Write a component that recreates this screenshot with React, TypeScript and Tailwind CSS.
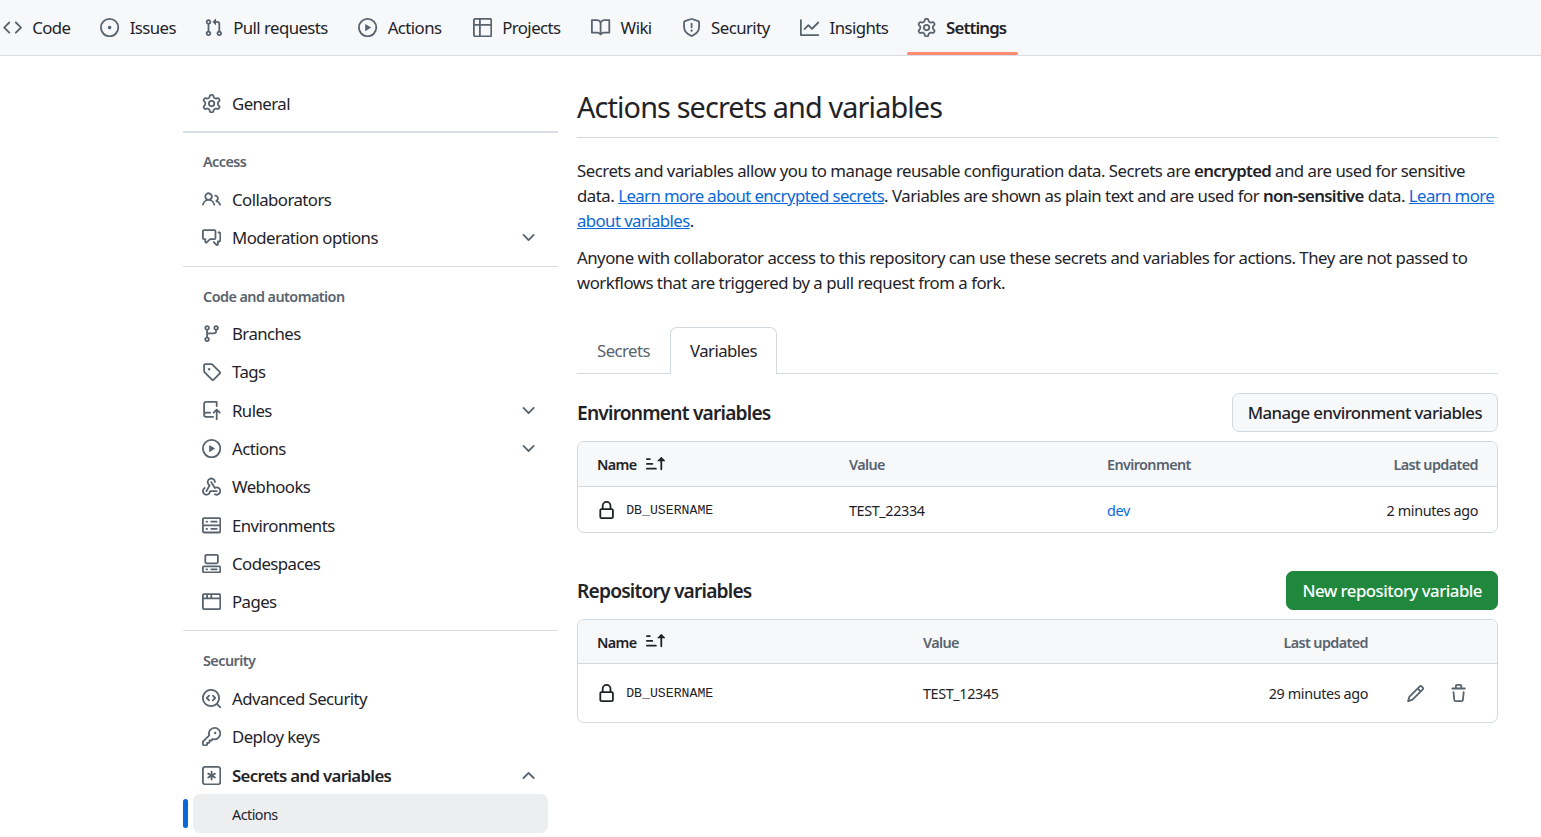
import type { ReactNode } from "react";

// octicons, 16px grid
const icons = {
  code: ["m11.28 3.22 4.25 4.25a.75.75 0 0 1 0 1.06l-4.25 4.25a.749.749 0 0 1-1.275-.326.749.749 0 0 1 .215-.734L13.94 8l-3.72-3.72a.749.749 0 0 1 .326-1.275.749.749 0 0 1 .734.215Zm-6.56 0a.751.751 0 0 1 1.042.018.751.751 0 0 1 .018 1.042L2.06 8l3.72 3.72a.749.749 0 0 1-.326 1.275.749.749 0 0 1-.734-.215L.47 8.53a.75.75 0 0 1 0-1.06Z"],
  issue: ["M8 9.5a1.5 1.5 0 1 0 0-3 1.5 1.5 0 0 0 0 3Z", "M8 0a8 8 0 1 1 0 16A8 8 0 0 1 8 0ZM1.5 8a6.5 6.5 0 1 0 13 0 6.5 6.5 0 0 0-13 0Z"],
  pull: ["M1.5 3.25a2.25 2.25 0 1 1 3 2.122v5.256a2.251 2.251 0 1 1-1.5 0V5.372A2.25 2.25 0 0 1 1.5 3.25Zm5.677-.177L9.573.677A.25.25 0 0 1 10 .854V2.5h1A2.5 2.5 0 0 1 13.5 5v5.628a2.251 2.251 0 1 1-1.5 0V5a1 1 0 0 0-1-1h-1v1.646a.25.25 0 0 1-.427.177L7.177 3.427a.25.25 0 0 1 0-.354ZM3.75 2.5a.75.75 0 1 0 0 1.5.75.75 0 0 0 0-1.5Zm0 9.5a.75.75 0 1 0 0 1.5.75.75 0 0 0 0-1.5Zm8.25.75a.75.75 0 1 0 1.5 0 .75.75 0 0 0-1.5 0Z"],
  play: ["M8 0a8 8 0 1 1 0 16A8 8 0 0 1 8 0ZM1.5 8a6.5 6.5 0 1 0 13 0 6.5 6.5 0 0 0-13 0Zm4.879-2.773 4.264 2.559a.25.25 0 0 1 0 .428l-4.264 2.559A.25.25 0 0 1 6 10.559V5.442a.25.25 0 0 1 .379-.215Z"],
  table: ["M0 1.75C0 .784.784 0 1.75 0h12.5C15.216 0 16 .784 16 1.75v12.5A1.75 1.75 0 0 1 14.25 16H1.75A1.75 1.75 0 0 1 0 14.25ZM6.5 6.5v8h7.75a.25.25 0 0 0 .25-.25V6.5Zm8-1.5V1.75a.25.25 0 0 0-.25-.25H6.5V5Zm-13 1.5v7.75c0 .138.112.25.25.25H5v-8ZM5 5V1.5H1.75a.25.25 0 0 0-.25.25V5Z"],
  book: ["M0 1.75A.75.75 0 0 1 .75 1h4.253c1.227 0 2.317.59 3 1.501A3.743 3.743 0 0 1 11.006 1h4.245a.75.75 0 0 1 .75.75v10.5a.75.75 0 0 1-.75.75h-4.507a2.25 2.25 0 0 0-1.591.659l-.622.621a.75.75 0 0 1-1.06 0l-.622-.621A2.25 2.25 0 0 0 5.258 13H.75a.75.75 0 0 1-.75-.75Zm7.251 10.324.004-5.073-.002-2.253A2.25 2.25 0 0 0 5.003 2.5H1.5v9h3.757a3.75 3.75 0 0 1 1.994.574ZM8.755 4.75l-.004 7.322a3.752 3.752 0 0 1 1.992-.572H14.5v-9h-3.495a2.25 2.25 0 0 0-2.25 2.25Z"],
  shield: ["M7.467.133a1.748 1.748 0 0 1 1.066 0l5.25 1.68A1.75 1.75 0 0 1 15 3.48V7c0 1.566-.32 3.182-1.303 4.682-.983 1.498-2.585 2.813-5.032 3.855a1.697 1.697 0 0 1-1.33 0c-2.447-1.042-4.049-2.357-5.032-3.855C1.32 10.182 1 8.566 1 7V3.48a1.75 1.75 0 0 1 1.217-1.667Zm.61 1.429a.25.25 0 0 0-.153 0l-5.25 1.68a.25.25 0 0 0-.174.238V7c0 1.358.275 2.666 1.057 3.86.784 1.194 2.121 2.34 4.366 3.297a.196.196 0 0 0 .154 0c2.245-.956 3.582-2.104 4.366-3.298C13.225 9.666 13.5 8.36 13.5 7V3.48a.251.251 0 0 0-.174-.237l-5.25-1.68ZM8.75 4.75v3a.75.75 0 0 1-1.5 0v-3a.75.75 0 0 1 1.5 0ZM9 10.5a1 1 0 1 1-2 0 1 1 0 0 1 2 0Z"],
  graph: ["M1.5 1.75V13.5h13.75a.75.75 0 0 1 0 1.5H.75a.75.75 0 0 1-.75-.75V1.75a.75.75 0 0 1 1.5 0Zm14.28 2.53-5.25 5.25a.75.75 0 0 1-1.06 0L7 7.06 4.28 9.78a.751.751 0 0 1-1.042-.018.751.751 0 0 1-.018-1.042l3.25-3.25a.75.75 0 0 1 1.06 0L10 7.94l4.72-4.72a.751.751 0 0 1 1.042.018.751.751 0 0 1 .018 1.042Z"],
  gear: ["M8 0a8.2 8.2 0 0 1 .701.031C9.444.095 9.99.645 10.16 1.29l.288 1.107c.018.066.079.158.212.224.231.114.454.243.668.386.123.082.233.09.299.071l1.103-.303c.644-.176 1.392.021 1.82.63.27.385.506.792.704 1.218.315.675.111 1.422-.364 1.891l-.814.806c-.049.048-.098.147-.088.294.016.257.016.515 0 .772-.01.147.038.246.088.294l.814.806c.475.469.679 1.216.364 1.891a7.977 7.977 0 0 1-.704 1.217c-.428.61-1.176.807-1.82.63l-1.102-.302c-.067-.019-.177-.011-.3.071a5.909 5.909 0 0 1-.668.386c-.133.066-.194.158-.211.224l-.29 1.106c-.168.646-.715 1.196-1.458 1.26a8.006 8.006 0 0 1-1.402 0c-.743-.064-1.289-.614-1.458-1.26l-.289-1.106c-.018-.066-.079-.158-.212-.224a5.738 5.738 0 0 1-.668-.386c-.123-.082-.233-.09-.299-.071l-1.103.303c-.644.176-1.392-.021-1.82-.63a8.12 8.12 0 0 1-.704-1.218c-.315-.675-.111-1.422.363-1.891l.815-.806c.05-.048.098-.147.088-.294a6.214 6.214 0 0 1 0-.772c.01-.147-.038-.246-.088-.294l-.815-.806C.635 6.045.431 5.298.746 4.623a7.92 7.92 0 0 1 .704-1.217c.428-.61 1.176-.807 1.82-.63l1.102.302c.067.019.177.011.3-.071.214-.143.437-.272.668-.386.133-.066.194-.158.211-.224l.29-1.106C6.009.645 6.556.095 7.299.03 7.53.01 7.764 0 8 0Zm-.571 1.525c-.036.003-.108.036-.137.146l-.289 1.105c-.147.561-.549.967-.998 1.189-.173.086-.34.183-.5.29-.417.278-.97.423-1.529.27l-1.103-.303c-.109-.03-.175.016-.195.045-.22.312-.412.644-.573.99-.014.031-.021.11.059.19l.815.806c.411.406.562.957.53 1.456a4.709 4.709 0 0 0 0 .582c.032.499-.119 1.05-.53 1.456l-.815.806c-.081.08-.073.159-.059.19.162.346.353.677.573.989.02.03.085.076.195.046l1.102-.303c.56-.153 1.113-.008 1.53.27.161.107.328.204.501.29.447.222.85.629.997 1.189l.289 1.105c.029.109.101.143.137.146a6.6 6.6 0 0 0 1.142 0c.036-.003.108-.036.137-.146l.289-1.105c.147-.561.549-.967.998-1.189.173-.086.34-.183.5-.29.417-.278.97-.423 1.529-.27l1.103.303c.109.029.175-.016.195-.045.22-.313.411-.644.573-.99.014-.031.021-.11-.059-.19l-.815-.806c-.411-.406-.562-.957-.53-1.456a4.709 4.709 0 0 0 0-.582c-.032-.499.119-1.05.53-1.456l.815-.806c.081-.08.073-.159.059-.19a6.464 6.464 0 0 0-.573-.989c-.02-.03-.085-.076-.195-.046l-1.102.303c-.56.153-1.113.008-1.53-.27a4.44 4.44 0 0 0-.501-.29c-.447-.222-.85-.629-.997-1.189l-.289-1.105c-.029-.11-.101-.143-.137-.146a6.6 6.6 0 0 0-1.142 0ZM11 8a3 3 0 1 1-6 0 3 3 0 0 1 6 0ZM9.5 8a1.5 1.5 0 1 0-3.001.001A1.5 1.5 0 0 0 9.5 8Z"],
  people: ["M2 5.5a3.5 3.5 0 1 1 5.898 2.549 5.508 5.508 0 0 1 3.034 4.084.75.75 0 1 1-1.482.235 4 4 0 0 0-7.9 0 .75.75 0 0 1-1.482-.236A5.507 5.507 0 0 1 3.102 8.05 3.493 3.493 0 0 1 2 5.5ZM11 4a3.001 3.001 0 0 1 2.22 5.018 5.01 5.01 0 0 1 2.56 3.012.749.749 0 0 1-.885.954.752.752 0 0 1-.549-.514 3.507 3.507 0 0 0-2.522-2.372.75.75 0 0 1-.574-.73v-.352a.75.75 0 0 1 .416-.672A1.5 1.5 0 0 0 11 5.5.75.75 0 0 1 11 4Zm-5.5-.5a2 2 0 1 0-.001 3.999A2 2 0 0 0 5.5 3.5Z"],
  discussion: ["M1.75 1h8.5c.966 0 1.75.784 1.75 1.75v5.5A1.75 1.75 0 0 1 10.25 10H7.061l-2.574 2.573A1.458 1.458 0 0 1 2 11.543V10h-.25A1.75 1.75 0 0 1 0 8.25v-5.5C0 1.784.784 1 1.75 1ZM1.5 2.75v5.5c0 .138.112.25.25.25h1a.75.75 0 0 1 .75.75v2.19l2.72-2.72a.749.749 0 0 1 .53-.22h3.5a.25.25 0 0 0 .25-.25v-5.5a.25.25 0 0 0-.25-.25h-8.5a.25.25 0 0 0-.25.25Zm13 2a.25.25 0 0 0-.25-.25h-.5a.75.75 0 0 1 0-1.5h.5c.966 0 1.75.784 1.75 1.75v5.5A1.75 1.75 0 0 1 14.25 12H14v1.543a1.458 1.458 0 0 1-2.487 1.03L9.22 12.28a.749.749 0 0 1 .326-1.275.749.749 0 0 1 .734.215l2.22 2.22v-2.19a.75.75 0 0 1 .75-.75h1a.25.25 0 0 0 .25-.25Z"],
  branch: ["M9.5 3.25a2.25 2.25 0 1 1 3 2.122V6A2.5 2.5 0 0 1 10 8.5H6a1 1 0 0 0-1 1v1.128a2.251 2.251 0 1 1-1.5 0V5.372a2.25 2.25 0 1 1 1.5 0v1.836A2.493 2.493 0 0 1 6 7h4a1 1 0 0 0 1-1v-.628A2.25 2.25 0 0 1 9.5 3.25Zm-6 0a.75.75 0 1 0 1.5 0 .75.75 0 0 0-1.5 0Zm8.25-.75a.75.75 0 1 0 0 1.5.75.75 0 0 0 0-1.5ZM4.25 12a.75.75 0 1 0 0 1.5.75.75 0 0 0 0-1.5Z"],
  tag: ["M1 7.775V2.75C1 1.784 1.784 1 2.75 1h5.025c.464 0 .91.184 1.238.513l6.25 6.25a1.75 1.75 0 0 1 0 2.474l-5.026 5.026a1.75 1.75 0 0 1-2.474 0l-6.25-6.25A1.75 1.75 0 0 1 1 7.775Zm1.5 0c0 .066.026.13.073.177l6.25 6.25a.25.25 0 0 0 .354 0l5.025-5.025a.25.25 0 0 0 0-.354l-6.25-6.25a.25.25 0 0 0-.177-.073H2.75a.25.25 0 0 0-.25.25ZM6 5a1 1 0 1 1 0 2 1 1 0 0 1 0-2Z"],
  repoPush: ["M1 2.5A2.5 2.5 0 0 1 3.5 0h8.75a.75.75 0 0 1 .75.75v3.5a.75.75 0 0 1-1.5 0V1.5h-8a1 1 0 0 0-1 1v6.708A2.493 2.493 0 0 1 3.5 9h3.25a.75.75 0 0 1 0 1.5H3.5a1 1 0 0 0 0 2h5.75a.75.75 0 0 1 0 1.5H3.5A2.5 2.5 0 0 1 1 11.5Zm13.23 7.79h-.001l-1.224-1.224v6.184a.75.75 0 0 1-1.5 0V9.066L10.28 10.29a.75.75 0 0 1-1.06-1.061l2.505-2.504a.75.75 0 0 1 1.06 0L15.29 9.23a.751.751 0 0 1-.018 1.042.751.751 0 0 1-1.042.018Z"],
  webhook: [
    "M5.5 4.25a2.25 2.25 0 0 1 4.5 0 .75.75 0 0 0 1.5 0 3.75 3.75 0 1 0-6.14 2.889l-2.272 4.258a.75.75 0 0 0 1.324.706L7 7.25a.75.75 0 0 0-.309-1.015A2.25 2.25 0 0 1 5.5 4.25Z",
    "M7.364 3.607a.75.75 0 0 1 1.03.257l2.608 4.349a3.75 3.75 0 1 1-.628 6.785.75.75 0 0 1 .752-1.299 2.25 2.25 0 1 0-.033-3.88.75.75 0 0 1-1.03-.256L7.107 4.636a.75.75 0 0 1 .257-1.03Z",
    "M2.9 8.776A.75.75 0 0 1 2.625 9.8 2.25 2.25 0 1 0 6 11.75a.75.75 0 0 1 .75-.751h5.5a.75.75 0 0 1 0 1.5H7.425a3.751 3.751 0 1 1-5.55-3.998.75.75 0 0 1 1.024.274Z",
  ],
  server: ["M1.75 1h12.5c.966 0 1.75.784 1.75 1.75v4c0 .372-.116.717-.314 1 .198.283.314.628.314 1v4a1.75 1.75 0 0 1-1.75 1.75H1.75A1.75 1.75 0 0 1 0 12.75v-4c0-.358.109-.707.314-1a1.739 1.739 0 0 1-.314-1v-4C0 1.784.784 1 1.75 1ZM1.5 2.75v4c0 .138.112.25.25.25h12.5a.25.25 0 0 0 .25-.25v-4a.25.25 0 0 0-.25-.25H1.75a.25.25 0 0 0-.25.25Zm.25 5.75a.25.25 0 0 0-.25.25v4c0 .138.112.25.25.25h12.5a.25.25 0 0 0 .25-.25v-4a.25.25 0 0 0-.25-.25ZM7 4.75A.75.75 0 0 1 7.75 4h4.5a.75.75 0 0 1 0 1.5h-4.5A.75.75 0 0 1 7 4.75ZM7.75 10h4.5a.75.75 0 0 1 0 1.5h-4.5a.75.75 0 0 1 0-1.5ZM3 4.75A.75.75 0 0 1 3.75 4h.5a.75.75 0 0 1 0 1.5h-.5A.75.75 0 0 1 3 4.75ZM3.75 10h.5a.75.75 0 0 1 0 1.5h-.5a.75.75 0 0 1 0-1.5Z"],
  codespaces: [
    "M0 11.25c0-.966.784-1.75 1.75-1.75h12.5c.966 0 1.75.784 1.75 1.75v3A1.75 1.75 0 0 1 14.25 16H1.75A1.75 1.75 0 0 1 0 14.25Zm2-9.5C2 .784 2.784 0 3.75 0h8.5C13.216 0 14 .784 14 1.75v5a1.75 1.75 0 0 1-1.75 1.75h-8.5A1.75 1.75 0 0 1 2 6.75Zm1.75-.25a.25.25 0 0 0-.25.25v5c0 .138.112.25.25.25h8.5a.25.25 0 0 0 .25-.25v-5a.25.25 0 0 0-.25-.25Zm-2 9.5a.25.25 0 0 0-.25.25v3c0 .138.112.25.25.25h12.5a.25.25 0 0 0 .25-.25v-3a.25.25 0 0 0-.25-.25Z",
    "M7 12.75a.75.75 0 0 1 .75-.75h4.5a.75.75 0 0 1 0 1.5h-4.5a.75.75 0 0 1-.75-.75Zm-4 0a.75.75 0 0 1 .75-.75h.5a.75.75 0 0 1 0 1.5h-.5a.75.75 0 0 1-.75-.75Z",
  ],
  browser: ["M0 2.75C0 1.784.784 1 1.75 1h12.5c.966 0 1.75.784 1.75 1.75v10.5A1.75 1.75 0 0 1 14.25 15H1.75A1.75 1.75 0 0 1 0 13.25ZM14.5 6h-13v7.25c0 .138.112.25.25.25h12.5a.25.25 0 0 0 .25-.25Zm-6-3.5v2h6V2.75a.25.25 0 0 0-.25-.25ZM5 2.5v2h2v-2Zm-3.25 0a.25.25 0 0 0-.25.25V4.5h2v-2Z"],
  codescan: [
    "M8.47 4.97a.75.75 0 0 0 0 1.06L9.94 7.5 8.47 8.97a.75.75 0 1 0 1.06 1.06l2-2a.75.75 0 0 0 0-1.06l-2-2a.75.75 0 0 0-1.06 0ZM6.53 6.03a.75.75 0 0 0-1.06-1.06l-2 2a.75.75 0 0 0 0 1.06l2 2a.75.75 0 1 0 1.06-1.06L5.06 7.5l1.47-1.47Z",
    "M12.246 13.307a7.501 7.501 0 1 1 1.06-1.06l2.474 2.473a.749.749 0 0 1-.326 1.275.749.749 0 0 1-.734-.215ZM1.5 7.5a6.002 6.002 0 0 0 3.608 5.504 6.002 6.002 0 0 0 6.486-1.117.748.748 0 0 1 .292-.293A6 6 0 1 0 1.5 7.5Z",
  ],
  key: ["M10.5 0a5.499 5.499 0 1 1-1.288 10.848l-.932.932a.749.749 0 0 1-.53.22H7v.75a.749.749 0 0 1-.22.53l-.5.5a.749.749 0 0 1-.53.22H5v.75a.749.749 0 0 1-.22.53l-.5.5a.749.749 0 0 1-.53.22h-2A1.75 1.75 0 0 1 0 14.25v-2c0-.199.079-.389.22-.53l4.932-4.932A5.5 5.5 0 0 1 10.5 0Zm-4 5.5c-.001.431.069.86.205 1.269a.75.75 0 0 1-.181.768L1.5 12.56v1.69c0 .138.112.25.25.25h1.69l.06-.06v-1.19a.75.75 0 0 1 .75-.75h1.19l.06-.06v-1.19a.75.75 0 0 1 .75-.75h1.19l1.023-1.025a.75.75 0 0 1 .768-.18A4 4 0 1 0 6.5 5.5ZM11 6a1 1 0 1 1 0-2 1 1 0 0 1 0 2Z"],
  keyAsterisk: [
    "M0 2.75A2.75 2.75 0 0 1 2.75 0h10.5A2.75 2.75 0 0 1 16 2.75v10.5A2.75 2.75 0 0 1 13.25 16H2.75A2.75 2.75 0 0 1 0 13.25ZM2.75 1.5c-.69 0-1.25.56-1.25 1.25v10.5c0 .69.56 1.25 1.25 1.25h10.5c.69 0 1.25-.56 1.25-1.25V2.75c0-.69-.56-1.25-1.25-1.25Z",
    "M8 4a.75.75 0 0 1 .75.75V6.7l1.69-.975a.75.75 0 0 1 .75 1.3L9.5 8l1.69.976a.75.75 0 0 1-.75 1.298L8.75 9.3v1.951a.75.75 0 0 1-1.5 0V9.299l-1.69.976a.75.75 0 0 1-.75-1.3L6.5 8l-1.69-.975a.75.75 0 0 1 .75-1.3l1.69.976V4.75A.75.75 0 0 1 8 4Z",
  ],
  lock: ["M4 4a4 4 0 0 1 8 0v2h.25c.966 0 1.75.784 1.75 1.75v5.5A1.75 1.75 0 0 1 12.25 15h-8.5A1.75 1.75 0 0 1 2 13.25v-5.5C2 6.784 2.784 6 3.75 6H4Zm8.25 3.5h-8.5a.25.25 0 0 0-.25.25v5.5c0 .138.112.25.25.25h8.5a.25.25 0 0 0 .25-.25v-5.5a.25.25 0 0 0-.25-.25ZM10.5 6V4a2.5 2.5 0 1 0-5 0v2Z"],
  pencil: ["M11.013 1.427a1.75 1.75 0 0 1 2.474 0l1.086 1.086a1.75 1.75 0 0 1 0 2.474l-8.61 8.61c-.21.21-.47.364-.756.445l-3.251.93a.75.75 0 0 1-.927-.928l.929-3.25c.081-.286.235-.547.445-.758l8.61-8.61Zm.176 4.823L9.75 4.81l-6.286 6.287a.253.253 0 0 0-.064.108l-.558 1.953 1.953-.558a.253.253 0 0 0 .108-.064Zm1.238-3.763a.25.25 0 0 0-.354 0L10.811 3.75l1.439 1.44 1.263-1.263a.25.25 0 0 0 0-.354Z"],
  trash: ["M11 1.75V3h2.25a.75.75 0 0 1 0 1.5H2.75a.75.75 0 0 1 0-1.5H5V1.75C5 .784 5.784 0 6.75 0h2.5C10.216 0 11 .784 11 1.75ZM4.496 6.675l.66 6.6a.25.25 0 0 0 .249.225h5.19a.25.25 0 0 0 .249-.225l.66-6.6a.75.75 0 0 1 1.492.149l-.66 6.6A1.748 1.748 0 0 1 10.595 15h-5.19a1.75 1.75 0 0 1-1.741-1.575l-.66-6.6a.75.75 0 1 1 1.492-.15ZM6.5 1.75V3h3V1.75a.25.25 0 0 0-.25-.25h-2.5a.25.25 0 0 0-.25.25Z"],
  sortAsc: ["m12.927 2.573 3 3A.25.25 0 0 1 15.75 6H13.5v6.75a.75.75 0 0 1-1.5 0V6H9.75a.25.25 0 0 1-.177-.427l3-3a.25.25 0 0 1 .354 0ZM0 12.25a.75.75 0 0 1 .75-.75h7.5a.75.75 0 0 1 0 1.5H.75a.75.75 0 0 1-.75-.75Zm0-4a.75.75 0 0 1 .75-.75h4.5a.75.75 0 0 1 0 1.5H.75A.75.75 0 0 1 0 8.25Zm0-4a.75.75 0 0 1 .75-.75h2.5a.75.75 0 0 1 0 1.5H.75A.75.75 0 0 1 0 4.25Z"],
  chevronDown: ["M12.78 5.22a.749.749 0 0 1 0 1.06l-4.25 4.25a.749.749 0 0 1-1.06 0L3.22 6.28a.749.749 0 1 1 1.06-1.06L8 8.939l3.72-3.719a.749.749 0 0 1 1.06 0Z"],
  chevronUp: ["M3.22 10.53a.749.749 0 0 1 0-1.06l4.25-4.25a.749.749 0 0 1 1.06 0l4.25 4.25a.749.749 0 0 1-1.06 1.06L8 6.811 4.28 10.53a.749.749 0 0 1-1.06 0Z"],
};

type IconName = keyof typeof icons;

function Octicon({ name, className }: { name: IconName; className?: string }) {
  return (
    <svg viewBox="0 0 16 16" fill="currentColor" aria-hidden="true" className={`w-[19.2px] h-[19.2px] shrink-0 ${className ?? ""}`}>
      {icons[name].map((d) => (
        <path key={d} d={d} />
      ))}
    </svg>
  );
}

const tabs: { label: string; icon: IconName; width: string; active?: boolean }[] = [
  { label: "Code", icon: "code", width: "w-[39px]" },
  { label: "Issues", icon: "issue", width: "w-[45px]" },
  { label: "Pull requests", icon: "pull", width: "w-[96px]" },
  { label: "Actions", icon: "play", width: "w-[56px]" },
  { label: "Projects", icon: "table", width: "w-[60px]" },
  { label: "Wiki", icon: "book", width: "w-[32px]" },
  { label: "Security", icon: "shield", width: "w-[60px]" },
  { label: "Insights", icon: "graph", width: "w-[58px]" },
  { label: "Settings", icon: "gear", width: "w-[62px]", active: true },
];

function RepoNav() {
  return (
    <nav className="h-[56px] bg-[#f6f8fa] border-b border-[#d8dee4] flex">
      <ul className="flex -ml-[6.5px]">
        {tabs.map(({ label, icon, width, active }) => (
          <li key={label} className="relative flex items-center gap-[10px] px-[9.5px] mr-[10.3px] h-[55px] text-[#1f2328]">
            <Octicon name={icon} className="text-[#59636e]" />
            <span className={`${width} whitespace-nowrap ${active ? "font-semibold tracking-[-0.05em]" : ""}`}>{label}</span>
            {active && <span className="absolute left-0 right-0 bottom-0 h-[3px] rounded-sm bg-[#fd8c73]" />}
          </li>
        ))}
      </ul>
    </nav>
  );
}

function SideItem({
  icon,
  label,
  chevron,
  bold,
}: {
  icon: IconName;
  label: string;
  chevron?: "up" | "down";
  bold?: boolean;
}) {
  return (
    <div className="h-[38.4px] pb-[1.6px] flex items-center pl-[19px] pr-[20px] text-[#1f2328]">
      <Octicon name={icon} className="text-[#59636e]" />
      <span className={`ml-[10.8px] flex-1 ${bold ? "font-semibold tracking-[-0.04em]" : ""}`}>{label}</span>
      {chevron === "down" && <Octicon name="chevronDown" className="text-[#59636e]" />}
      {chevron === "up" && <Octicon name="chevronUp" className="text-[#59636e]" />}
    </div>
  );
}

function SideHeading({ children, low, space }: { children: ReactNode; low?: boolean; space?: string }) {
  return (
    <div className={`h-[38.4px] ${space ?? "mt-[9.6px]"} pl-[20px] flex items-center text-[14.4px] font-semibold text-[#59636e] ${low ? "pt-[2px]" : ""}`}>
      {children}
    </div>
  );
}

function Sidebar() {
  return (
    <aside className="w-[375px] shrink-0 pt-[29px] text-[16.8px]">
      <SideItem icon="gear" label="General" />
      <div className="mt-[7.6px] h-[2px] bg-[#d8dee4]" />
      <SideHeading>Access</SideHeading>
      <SideItem icon="people" label="Collaborators" />
      <SideItem icon="discussion" label="Moderation options" chevron="down" />
      <div className="mt-[8.2px] h-px bg-[#d8dee4]" />
      <SideHeading low>Code and automation</SideHeading>
      <SideItem icon="branch" label="Branches" />
      <SideItem icon="tag" label="Tags" />
      <SideItem icon="repoPush" label="Rules" chevron="down" />
      <SideItem icon="play" label="Actions" chevron="down" />
      <SideItem icon="webhook" label="Webhooks" />
      <SideItem icon="server" label="Environments" />
      <SideItem icon="codespaces" label="Codespaces" />
      <SideItem icon="browser" label="Pages" />
      <div className="mt-[8px] h-px bg-[#d8dee4]" />
      <SideHeading space="mt-[10.6px]">Security</SideHeading>
      <SideItem icon="codescan" label="Advanced Security" />
      <SideItem icon="key" label="Deploy keys" />
      <SideItem icon="keyAsterisk" label="Secrets and variables" chevron="up" bold />
      <div className="relative h-[39px] -mt-px ml-[10px] mr-[10px] pt-[2px] rounded-[7px] bg-[#eceef0] flex items-center pl-[39px] text-[14.4px] text-[#1f2328]">
        <span className="absolute -left-[10px] top-[5px] bottom-[5px] w-[5px] rounded-md bg-[#0969da]" />
        Actions
      </div>
    </aside>
  );
}

function Name() {
  return (
    <div className="flex items-center">
      <Octicon name="lock" className="text-[#1f2328]" />
      <span className="ml-[10px] font-['Liberation_Mono',monospace] tracking-normal text-[13.2px]">DB_USERNAME</span>
    </div>
  );
}

function NameHeader() {
  return (
    <div className="flex items-center text-[#1f2328]">
      Name
      <Octicon name="sortAsc" className="ml-[9px] -mt-[3px] text-[#1f2328]" />
    </div>
  );
}

function EnvironmentVariables() {
  return (
    <section>
      <div className="mt-[19px] flex items-center justify-between">
        <h3 className="pt-[2px] text-[19.2px] font-semibold tracking-[-0.042em]">Environment variables</h3>
        <button className="h-[39px] px-[15px] rounded-[7px] border border-[#d1d9e0] bg-[#f6f8fa] text-[16.8px] font-medium">
          Manage environment variables
        </button>
      </div>
      <div className="mt-[9px] rounded-[7px] border border-[#d1d9e0] text-[14.4px] overflow-hidden">
        <div className="h-[45px] pt-[2px] bg-[#f6f8fa] border-b border-[#d1d9e0] grid grid-cols-[252px_258px_1fr_auto] items-center pl-[19px] pr-[19px] font-semibold tracking-[-0.042em] text-[#59636e]">
          <NameHeader />
          <div>Value</div>
          <div>Environment</div>
          <div>Last updated</div>
        </div>
        <div className="h-[45px] pt-[2px] grid grid-cols-[252px_258px_1fr_auto] items-center pl-[19px] pr-[19px] tracking-[-0.027em]">
          <Name />
          <div>TEST_22334</div>
          <div className="text-[#0969da]">dev</div>
          <div>2 minutes ago</div>
        </div>
      </div>
    </section>
  );
}

function RepositoryVariables() {
  return (
    <section>
      <div className="mt-[38px] flex items-center justify-between">
        <h3 className="pt-[2px] text-[19.2px] font-semibold tracking-[-0.042em]">Repository variables</h3>
        <button className="h-[39px] px-[15px] rounded-[7px] border border-[#1f883d] bg-[#1f883d] text-white text-[16.8px] font-medium tracking-[-0.03em]">
          New repository variable
        </button>
      </div>
      <div className="mt-[9px] rounded-[7px] border border-[#d1d9e0] text-[14.4px] overflow-hidden">
        <div className="h-[44px] pt-[2px] bg-[#f6f8fa] border-b border-[#d1d9e0] grid grid-cols-[326px_1fr_auto_129px] items-center pl-[19px] font-semibold tracking-[-0.042em] text-[#59636e]">
          <NameHeader />
          <div>Value</div>
          <div>Last updated</div>
          <div />
        </div>
        <div className="h-[58px] pt-[2px] grid grid-cols-[326px_1fr_auto_129px] items-center pl-[19px] tracking-[-0.027em]">
          <Name />
          <div>TEST_12345</div>
          <div>29 minutes ago</div>
          <div className="flex items-center pl-[38px] gap-[24px] text-[#59636e]">
            <Octicon name="pencil" />
            <Octicon name="trash" />
          </div>
        </div>
      </div>
    </section>
  );
}

function Main() {
  return (
    <main className="w-[921px] ml-[19px] pt-[30px] text-[16.8px]">
      <h1 className="h-[52px] border-b border-[#d1d9e0] text-[28.8px] leading-[42px] tracking-[-0.03em]">
        Actions secrets and variables
      </h1>
      <p className="mt-[20px] leading-[25.2px] tracking-[-0.029em]">
        Secrets and variables allow you to manage reusable configuration data. Secrets are{" "}
        <strong className="font-semibold tracking-[-0.04em]">encrypted</strong> and are used for sensitive data.{" "}
        <a className="text-[#0969da] underline tracking-[-0.035em]">Learn more about encrypted secrets</a>. Variables are shown as plain
        text and are used for <strong className="font-semibold tracking-[-0.04em]">non-sensitive</strong> data.{" "}
        <a className="text-[#0969da] underline tracking-[-0.035em]">Learn more about variables</a>.
      </p>
      <p className="mt-[11px] leading-[25.2px] tracking-[-0.029em]">
        Anyone with collaborator access to this repository can use these secrets and variables for actions. They are
        not passed to workflows that are triggered by a pull request from a fork.
      </p>
      <div className="mt-[32px] h-[47px] border-b border-[#d1d9e0] flex">
        <div className="h-[47px] px-[20px] flex items-center text-[#59636e]">Secrets</div>
        <div className="h-[47px] px-[19px] flex items-center rounded-t-[7px] border border-b-0 border-[#d1d9e0] bg-white">
          Variables
        </div>
      </div>
      <EnvironmentVariables />
      <RepositoryVariables />
    </main>
  );
}

export default function App() {
  return (
    <div className="h-[837px] overflow-hidden bg-white font-['Noto_Sans',sans-serif] text-[16.8px] tracking-[-0.033em] text-[#1f2328]">
      <RepoNav />
      <div className="flex pl-[183px]">
        <Sidebar />
        <Main />
      </div>
    </div>
  );
}
